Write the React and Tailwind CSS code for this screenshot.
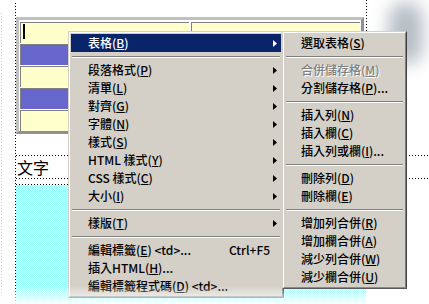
import React from "react";

const DOTS_V = "w-px bg-[linear-gradient(to_bottom,#000_1px,transparent_1px)] bg-[length:1px_3px]";
const DOTS_VF = "w-px bg-[linear-gradient(to_bottom,#c8c8c8_1px,transparent_1px)] bg-[length:1px_3px]";
const DOTS_H = "h-px bg-[linear-gradient(to_right,#000_1px,transparent_1px)] bg-[length:3px_1px]";

function Label({ text, acc, suffix }) {
  return (
    <span className="whitespace-nowrap">
      {text}(<span className="underline underline-offset-1">{acc}</span>){suffix}
    </span>
  );
}

function Arrow({ white }) {
  return (
    <svg width="4" height="7" viewBox="0 0 4 7" className="block">
      <polygon points="0,0 4,3.5 0,7" fill={white ? "#fff" : "#000"} />
    </svg>
  );
}

function Item({ text, acc, suffix, arrow, hl, disabled, shortcut, pl }) {
  const base = hl ? "bg-[#0a246a] text-white" : disabled ? "text-[#808080] [text-shadow:1px_1px_0_#fff]" : "text-black";
  return (
    <div className={`h-[18px] flex items-center ${pl} pr-[4px] ${base}`}>
      {shortcut ? (
        <>
          <div className="w-[141px]">
            <Label text={text} acc={acc} suffix={suffix} />
          </div>
          <span>{shortcut}</span>
        </>
      ) : (
        <Label text={text} acc={acc} suffix={suffix} />
      )}
      <div className="flex-1" />
      {arrow && <Arrow white={hl} />}
    </div>
  );
}

function Sep() {
  return (
    <div className="h-[9px] flex items-center px-px">
      <div className="w-full h-[2px] border-t border-t-[#808080] border-b border-b-white" />
    </div>
  );
}

function Frame({ children, className }) {
  return (
    <div className={`border border-t-[#d4d0c8] border-l-[#d4d0c8] border-r-[#404040] border-b-[#404040] ${className}`}>
      <div className="border border-t-white border-l-white border-r-[#808080] border-b-[#808080] bg-[#d4d0c8] p-px">
        {children}
      </div>
    </div>
  );
}

function Cell({ color, className = "" }) {
  return <div className={`h-[21px] border-t border-l border-t-[#808080] border-l-[#808080] ${color} ${className}`} />;
}

export default function App() {
  const main = "pl-[17px]";
  const sub = "pl-[16px]";
  return (
    <div className="relative w-[429px] h-[304px] bg-white overflow-hidden font-['Noto_Sans_CJK_TC','Noto_Sans_CJK_SC',sans-serif] font-medium text-[12px] leading-[18px]">
      {/* page content */}
      <div className="flex h-full">
        <div className="w-[15px] flex pt-[13px]">
          <div className={`ml-px ${DOTS_VF}`} />
        </div>
        <div className={`${DOTS_V} mt-[3px]`} />
        <div className="flex-1 flex flex-col">
          <div className="flex items-start">
            <div className="pt-[17px]">
              <div className="w-[348px] border-[3px] border-t-[#c0c0c0] border-l-[#c0c0c0] border-r-[#909090] border-b-[#909090] bg-white pt-[2px] pl-px pr-px flex flex-col gap-px">
                <div className="flex gap-[2px]">
                  <div className="w-[169px] h-[21px] border-t border-l border-t-[#808080] border-l-[#808080] bg-[#ffffcc] pt-[1px] pl-[2px]">
                    <div className="w-[2px] h-[15px] bg-black" />
                  </div>
                  <Cell color="bg-[#ffffcc]" className="flex-1" />
                </div>
                <Cell color="bg-[#6666cc]" />
                <Cell color="bg-[#ffffcc]" />
                <Cell color="bg-[#6666cc]" />
                <Cell color="bg-[#ffffcc]" />
              </div>
            </div>
            <div className={`${DOTS_V} h-[32px] ml-[2px]`} />
            <div className="ml-[22px] mt-[2px] w-[34px] h-[62px] rounded-full bg-[#b4bcc4] blur-[9px]" />
          </div>
          <div className="h-[21px]" />
          <div className={DOTS_H} />
          <div className="h-[22px] pl-[1px] flex items-center text-[16px] leading-[22px] font-normal">文字</div>
          <div className={DOTS_H} />
          <div className="h-[5px]" />
          <div className={`w-[350px] ${DOTS_H}`} />
          <div className="w-[350px] flex-1 bg-[repeating-conic-gradient(#8ffcfc_0_25%,#ffffff_0_50%)] bg-[length:2px_2px]" />
        </div>
      </div>

      {/* main context menu */}
      <Frame className="absolute left-[68px] top-[31px] w-[216px]">
        <Item text="表格" acc="B" arrow hl pl={main} />
        <Sep />
        <Item text="段落格式" acc="P" arrow pl={main} />
        <Item text="清單" acc="L" arrow pl={main} />
        <Item text="對齊" acc="G" arrow pl={main} />
        <Item text="字體" acc="N" arrow pl={main} />
        <Item text="樣式" acc="S" arrow pl={main} />
        <Item text="HTML 樣式" acc="Y" arrow pl={main} />
        <Item text="CSS 樣式" acc="C" arrow pl={main} />
        <Item text="大小" acc="I" arrow pl={main} />
        <Sep />
        <Item text="樣版" acc="T" arrow pl={main} />
        <Sep />
        <Item text="編輯標籤" acc="E" suffix=" <td>..." shortcut="Ctrl+F5" pl={main} />
        <Item text="插入HTML" acc="H" suffix="..." pl={main} />
        <Item text="編輯標籤程式碼" acc="D" suffix=" <td>..." pl={main} />
      </Frame>

      {/* submenu */}
      <Frame className="absolute left-[282px] top-[31px] w-[125px]">
        <Item text="選取表格" acc="S" pl={sub} />
        <Sep />
        <Item text="合併儲存格" acc="M" disabled pl={sub} />
        <Item text="分割儲存格" acc="P" suffix="..." pl={sub} />
        <Sep />
        <Item text="插入列" acc="N" pl={sub} />
        <Item text="插入欄" acc="C" pl={sub} />
        <Item text="插入列或欄" acc="I" suffix="..." pl={sub} />
        <Sep />
        <Item text="刪除列" acc="D" pl={sub} />
        <Item text="刪除欄" acc="E" pl={sub} />
        <Sep />
        <Item text="增加列合併" acc="R" pl={sub} />
        <Item text="增加欄合併" acc="A" pl={sub} />
        <Item text="減少列合併" acc="W" pl={sub} />
        <Item text="減少欄合併" acc="U" pl={sub} />
      </Frame>

      {/* bottom fade */}
      <div className="absolute left-0 right-0 bottom-0 h-[18px] bg-linear-to-b from-white/0 to-white/95" />
    </div>
  );
}
